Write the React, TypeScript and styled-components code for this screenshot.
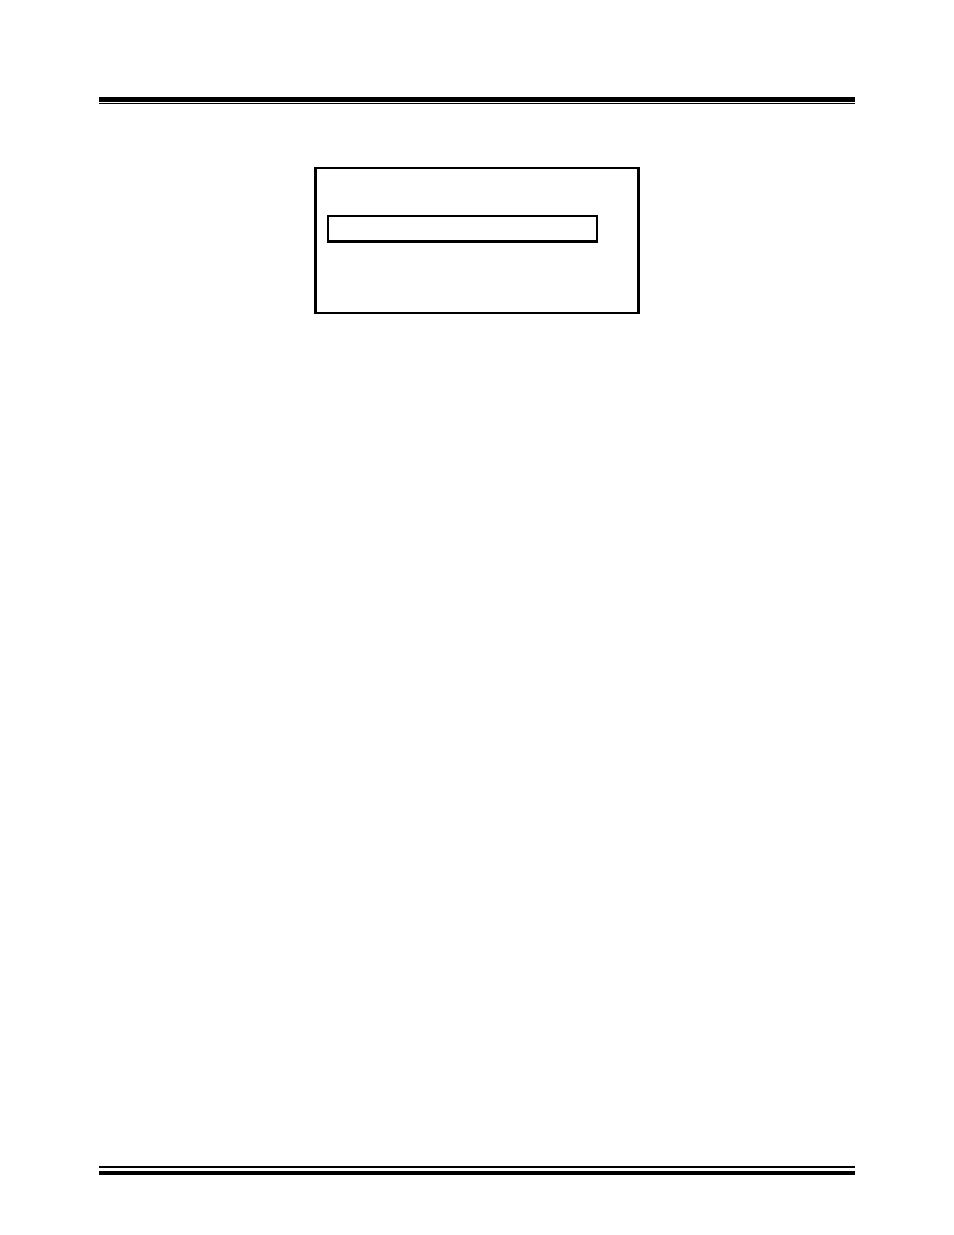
import React from "react";
import styled, { createGlobalStyle } from "styled-components";

const GlobalStyle = createGlobalStyle`
  * {
    box-sizing: border-box;
  }
  body {
    margin: 0;
    background: #ffffff;
    color: #000000;
    font-family: "Liberation Sans", Arial, sans-serif;
  }
`;

const Page = styled.div`
  display: flex;
  flex-direction: column;
  min-height: 100vh;
  padding: 97px 99px 60px;
`;

const HeaderRule = styled.header`
  height: 7px;
  border-top: 5px solid #000000;
  border-bottom: 1px solid #000000;
`;

const FooterRule = styled.footer`
  height: 9px;
  border-top: 2px solid #000000;
  border-bottom: 4px solid #000000;
`;

const Content = styled.main`
  flex: 1;
  display: flex;
  flex-direction: column;
  align-items: center;
  padding-top: 63px;
`;

const DisplayPanel = styled.section`
  width: 326px;
  max-width: 100%;
  height: 147px;
  padding: 46px 39px 0 10px;
  border: solid #000000;
  border-width: 2px 3px;
`;

const SelectedLine = styled.div`
  height: 28px;
  border: 2px solid #000000;
  border-bottom-width: 3px;
`;

export default function App() {
  return (
    <>
      <GlobalStyle />
      <Page>
        <HeaderRule />
        <Content>
          <DisplayPanel>
            <SelectedLine />
          </DisplayPanel>
        </Content>
        <FooterRule />
      </Page>
    </>
  );
}
